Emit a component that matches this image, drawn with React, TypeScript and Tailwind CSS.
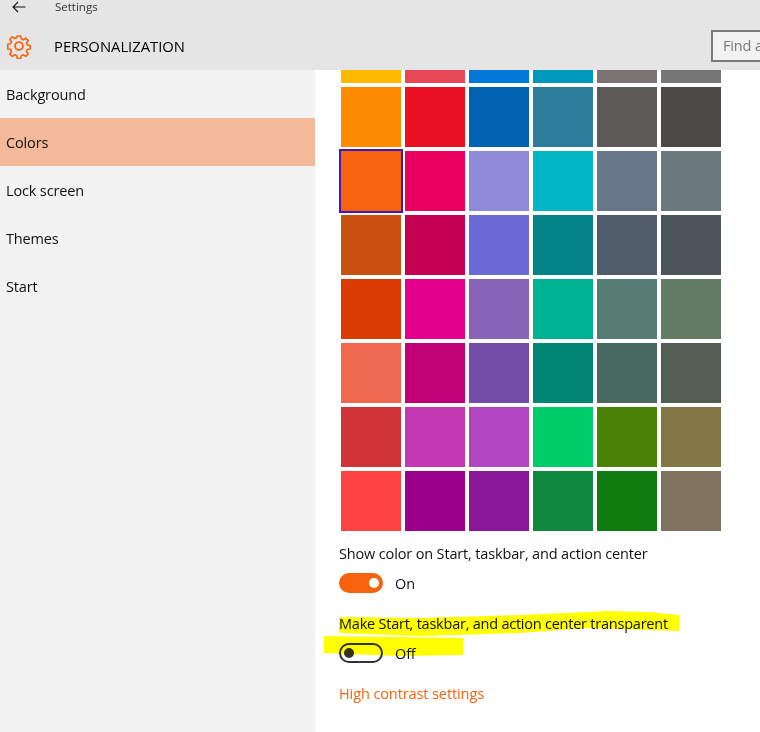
const rows = [
  ['#ffb900', '#e74856', '#0078d7', '#0099bc', '#7a7574', '#767676'],
  ['#ff8c00', '#e81123', '#0063b1', '#2d7d9a', '#5d5a58', '#4c4a48'],
  ['#f7630c', '#ea005e', '#8e8cd8', '#00b7c3', '#68768a', '#69797e'],
  ['#ca5010', '#c30052', '#6b69d6', '#038387', '#515c6b', '#4a5459'],
  ['#da3b01', '#e3008c', '#8764b8', '#00b294', '#567c73', '#647c64'],
  ['#ef6950', '#bf0077', '#744da9', '#018574', '#486860', '#525e54'],
  ['#d13438', '#c239b3', '#b146c2', '#00cc6a', '#498205', '#847545'],
  ['#ff4343', '#9a0089', '#881798', '#10893e', '#107c10', '#7e735f'],
];

const nav = ['Background', 'Colors', 'Lock screen', 'Themes', 'Start'];

export default function App() {
  return (
    <div className="relative flex h-[732px] w-[760px] flex-col overflow-hidden bg-white font-['Open_Sans','Noto_Sans',sans-serif] text-[14.5px] tracking-[-0.15px] text-[#111]">
      <header className="h-[70px] shrink-0 bg-[#e5e5e5]">
        <div className="flex h-[14px] items-center">
          <svg viewBox="0 0 14 12" className="ml-[12px] h-[12px] w-[14px]" fill="none" stroke="#111" strokeWidth="1.1">
            <path d="M13.5 6H1M6 1 1 6l5 5" />
          </svg>
          <span className="ml-[29px] text-[11.5px] tracking-normal text-[#333]">Settings</span>
        </div>
        <div className="mt-[16px] flex h-[32px] items-center">
          <svg viewBox="0 0 24 24" className="ml-[6px] h-[26px] w-[26px]" fill="none" stroke="#f7630c" strokeWidth="1.7" strokeLinejoin="round">
            <circle cx="12" cy="12" r="3.6" />
            <path d="M10.2 1.5h3.6l.6 3 2.1.9 2.6-1.7 2.5 2.5-1.7 2.6.9 2.1 3 .6v3.6l-3 .6-.9 2.1 1.7 2.6-2.5 2.5-2.6-1.7-2.1.9-.6 3h-3.6l-.6-3-2.1-.9-2.6 1.7-2.5-2.5 1.7-2.6-.9-2.1-3-.6V10.2l3-.6.9-2.1-1.7-2.6 2.5-2.5 2.6 1.7 2.1-.9z" transform="translate(12 12) scale(.88) translate(-12 -12)" />
          </svg>
          <span className="ml-[22px] text-[14.8px] font-medium tracking-normal text-black">PERSONALIZATION</span>
          <div className="ml-auto flex h-[32px] w-[49px] items-center overflow-hidden whitespace-nowrap border-y-2 border-l-2 border-[#7a7a7a] bg-[#f2f2f2] pl-[10px] text-[#777]">
            Find a
          </div>
        </div>
      </header>
      <div className="flex min-h-0 flex-1">
        <nav className="w-[315px] shrink-0 bg-[#f2f2f2]">
          {nav.map((item) => (
            <div key={item} className={`flex h-[48px] items-center pl-[6px] pt-[2px] ${item === 'Colors' ? 'bg-[#f4b998]' : ''}`}>
              {item}
            </div>
          ))}
        </nav>
        <main className="pl-[24px]">
          <div className="ml-[2px] flex flex-col gap-[4px]">
            {rows.map((row, i) => (
              <div key={i} className={`flex gap-[4px] ${i === 0 ? 'h-[13px]' : 'h-[60px]'}`}>
                {row.map((color) => (
                  <div
                    key={color}
                    className={`w-[60px] ${color === '#f7630c' ? 'outline-2 outline-[#4617b4]' : ''}`}
                    style={{ backgroundColor: color }}
                  />
                ))}
              </div>
            ))}
          </div>
          <p className="mt-[13px] leading-[20px]">Show color on Start, taskbar, and action center</p>
          <div className="mt-[9px] flex h-[20px] items-center gap-[12px]">
            <div className="flex h-[20px] w-[44px] items-center justify-end rounded-full bg-[#f7630c] pr-[4px]">
              <div className="h-[10px] w-[10px] rounded-full bg-white" />
            </div>
            <span className="pt-[2px]">On</span>
          </div>
          <p className="mt-[21px] leading-[20px] tracking-[-0.23px]">Make Start, taskbar, and action center transparent</p>
          <div className="mt-[9px] flex h-[20px] items-center gap-[12px]">
            <div className="flex h-[20px] w-[44px] items-center rounded-full border-2 border-[#333] pl-[3px]">
              <div className="h-[10px] w-[10px] rounded-full bg-[#333]" />
            </div>
            <span className="pt-[2px]">Off</span>
          </div>
          <p className="mt-[21px] leading-[20px] tracking-[-0.1px] text-[#f7630c]">High contrast settings</p>
        </main>
      </div>
      <svg viewBox="0 0 760 732" className="pointer-events-none absolute inset-0 h-[732px] w-[760px] mix-blend-multiply">
        <path d="M339 617 L420 618 L520 615 L587 612 L607 611 L648 612 L679 615 L679 631 L587 628 L520 633 L420 636 L339 633 Z M324 636 L463 638 L463 655 L400 656 L324 653 Z" fill="#ffff00" />
      </svg>
    </div>
  );
}
